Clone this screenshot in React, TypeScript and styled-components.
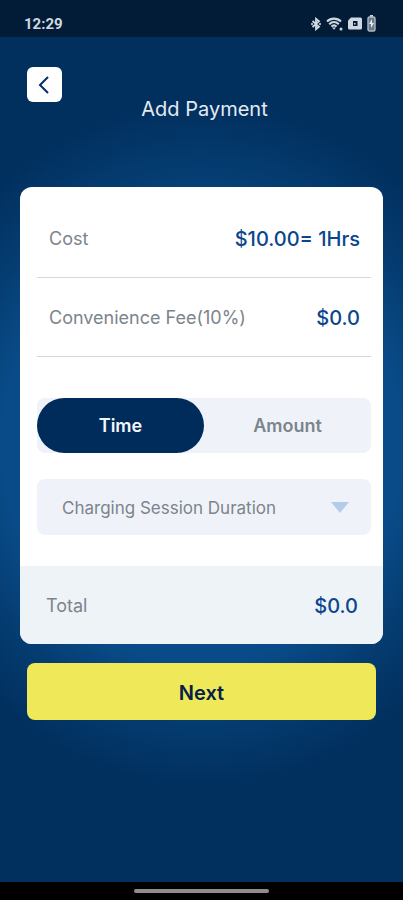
import React, { useState } from "react";
import styled, { createGlobalStyle } from "styled-components";

const navy = "#01305f";
const blue = "#0b468c";
const grey = "#7c848c";
const mist = "#eff3f9";

const GlobalStyle = createGlobalStyle`
  *, *::before, *::after { box-sizing: border-box; }
  body {
    margin: 0;
    background: #000;
    font-family: Inter, Roboto, "Liberation Sans", sans-serif;
  }
  button, select { font-family: inherit; }
`;

const Screen = styled.div`
  display: flex;
  flex-direction: column;
  min-height: 100vh;
  background: radial-gradient(ellipse 77% 340px at 50% 445px, #0a5095 0%, #094b88 64%, #053d72 80%, ${navy} 100%);
`;

const StatusBar = styled.div`
  display: flex;
  align-items: center;
  justify-content: space-between;
  height: 37px;
  padding: 10px 27px 0 24px;
  background: #021c38;
  color: #d0d8df;
`;

const Clock = styled.time`
  font-family: Roboto, sans-serif;
  font-size: 15px;
  line-height: 20px;
  font-weight: 700;
`;

const StatusIcons = styled.div`
  display: flex;
  align-items: center;
  gap: 5px;
`;

const Header = styled.header`
  display: grid;
  grid-template-columns: 35px 1fr 35px;
  padding: 30px 21px 0 27px;
`;

const BackButton = styled.button`
  display: flex;
  align-items: center;
  justify-content: center;
  width: 35px;
  height: 35px;
  padding: 0;
  border: 0;
  border-radius: 6px;
  background: #fff;
  color: ${navy};
  cursor: pointer;
`;

const Title = styled.h1`
  margin: 30px 0 0;
  color: #e3ebf2;
  font-size: 20px;
  line-height: 24px;
  font-weight: 400;
  text-align: center;
`;

const Form = styled.form`
  display: flex;
  flex-direction: column;
  padding: 66px 20px 0;
`;

const Card = styled.section`
  overflow: hidden;
  border-radius: 12px;
  background: #fff;
`;

const CardBody = styled.div`
  padding: 12px 12px 31px 17px;
`;

const Row = styled.div<{ $total?: boolean }>`
  display: flex;
  align-items: center;
  justify-content: space-between;
  height: ${(p) => (p.$total ? "78px" : "79px")};
  padding: ${(p) => (p.$total ? "2px 25px 0 26px" : "2px 11px 0 12px")};
  border-bottom: ${(p) => (p.$total ? "0" : "1px solid #d4d8de")};
  background: ${(p) => (p.$total ? "#eef3f8" : "transparent")};
`;

const Label = styled.span`
  color: ${grey};
  font-size: 18px;
  line-height: 24px;
`;

const Value = styled.span`
  color: ${blue};
  font-size: 20px;
  line-height: 24px;
  font-weight: 500;
`;

const Segmented = styled.div`
  display: grid;
  grid-template-columns: 1fr 1fr;
  margin-top: 41px;
  border-radius: 8px;
  background: ${mist};
`;

const Segment = styled.button<{ $active: boolean }>`
  height: 55px;
  padding: 0;
  border: 0;
  border-radius: 28px;
  background: ${(p) => (p.$active ? "#002c5b" : "transparent")};
  color: ${(p) => (p.$active ? "#f4f7fa" : grey)};
  font-size: 18px;
  font-weight: 600;
  cursor: pointer;
`;

const SelectBox = styled.div`
  display: grid;
  align-items: center;
  margin-top: 26px;
  border-radius: 8px;
  background: ${mist};
  > * { grid-area: 1 / 1; }
`;

const Select = styled.select`
  appearance: none;
  width: 100%;
  height: 56px;
  padding: 2px 48px 0 25px;
  border: 0;
  border-radius: 8px;
  background: transparent;
  color: ${grey};
  font-size: 17px;
`;

const Caret = styled.svg`
  justify-self: end;
  margin-right: 22px;
  pointer-events: none;
`;

const NextButton = styled.button`
  height: 57px;
  margin: 19px 7px 0;
  padding: 2px 0 0;
  border: 0;
  border-radius: 8px;
  background: #efe95a;
  color: #04204b;
  font-size: 20px;
  font-weight: 600;
  cursor: pointer;
`;

const NavBar = styled.div`
  display: flex;
  justify-content: center;
  align-items: center;
  height: 18px;
  margin-top: auto;
  background: #000;
`;

const Handle = styled.div`
  width: 135px;
  height: 4px;
  border-radius: 2px;
  background: #8e8e8e;
`;

function BluetoothIcon() {
  return (
    <svg width="10" height="14" viewBox="0 0 10 14" fill="none" stroke="currentColor" strokeWidth="1.8">
      <path d="M1.5 4 8 9.7 5 12.2V1.8L8 4.3 1.5 10" />
      <path d="M.2 7h1.6M8.2 7h1.6" />
    </svg>
  );
}

function WifiIcon() {
  return (
    <svg width="17" height="14" viewBox="0 0 17 14" fill="none" stroke="currentColor" strokeWidth="2.1">
      <path d="M1 4.6C5 .6 11 .6 15 4.6M3.2 7.2c2.9-2.8 6.7-2.8 9.6 0M5.4 9.6c1.6-1.5 3.6-1.5 5.2 0" />
      <path d="m6 10.4 2 2.4 2-2.4Z" fill="currentColor" stroke="none" />
      <circle cx="15" cy="12" r="1.5" fill="currentColor" stroke="none" />
    </svg>
  );
}

function CardIcon() {
  return (
    <svg width="14" height="13" viewBox="0 0 14 13">
      <path fill="currentColor" d="M3 .5h9.5Q14 .5 14 2v9q0 1.5-1.5 1.5h-11Q0 12.5 0 11V3.5Z" />
      <path fill="#021c38" d="M5 4h4.5v5H5Z" />
      <path fill="currentColor" d="M6 6h1.5v1.5H6Z" />
    </svg>
  );
}

function BatteryIcon() {
  return (
    <svg width="9" height="17" viewBox="0 0 9 17">
      <path fill="currentColor" d="M3 0h3v2H3Z" />
      <rect x="1" y="2" width="7" height="14" rx="1.5" fill="#6b7a89" stroke="#aeb9c3" strokeWidth="1.4" />
      <path fill="#e6ecf1" d="m5 4-3 5h2v4l3-5H5Z" />
    </svg>
  );
}

export default function App() {
  const [mode, setMode] = useState("Time");

  return (
    <>
      <GlobalStyle />
      <Screen>
        <StatusBar>
          <Clock>12:29</Clock>
          <StatusIcons aria-hidden="true">
            <BluetoothIcon />
            <WifiIcon />
            <CardIcon />
            <BatteryIcon />
          </StatusIcons>
        </StatusBar>
        <Header>
          <BackButton type="button" aria-label="Back">
            <svg width="14" height="18" viewBox="0 0 14 18" fill="none" stroke="currentColor" strokeWidth="2">
              <path d="M10 1 2 9l8 8" />
            </svg>
          </BackButton>
          <Title>Add Payment</Title>
        </Header>
        <Form onSubmit={(e) => e.preventDefault()}>
          <Card>
            <CardBody>
              <Row>
                <Label>Cost</Label>
                <Value>$10.00= 1Hrs</Value>
              </Row>
              <Row>
                <Label>Convenience Fee(10%)</Label>
                <Value>$0.0</Value>
              </Row>
              <Segmented role="group" aria-label="Charge by">
                {["Time", "Amount"].map((name) => (
                  <Segment
                    key={name}
                    type="button"
                    $active={mode === name}
                    aria-pressed={mode === name}
                    onClick={() => setMode(name)}
                  >
                    {name}
                  </Segment>
                ))}
              </Segmented>
              <SelectBox>
                <Select aria-label="Charging Session Duration" defaultValue="">
                  <option value="">Charging Session Duration</option>
                </Select>
                <Caret width="18" height="11" viewBox="0 0 18 11" aria-hidden="true">
                  <path d="M0 0h18L9 11Z" fill="#b4cbec" />
                </Caret>
              </SelectBox>
            </CardBody>
            <Row $total>
              <Label>Total</Label>
              <Value>$0.0</Value>
            </Row>
          </Card>
          <NextButton type="submit">Next</NextButton>
        </Form>
        <NavBar>
          <Handle />
        </NavBar>
      </Screen>
    </>
  );
}
